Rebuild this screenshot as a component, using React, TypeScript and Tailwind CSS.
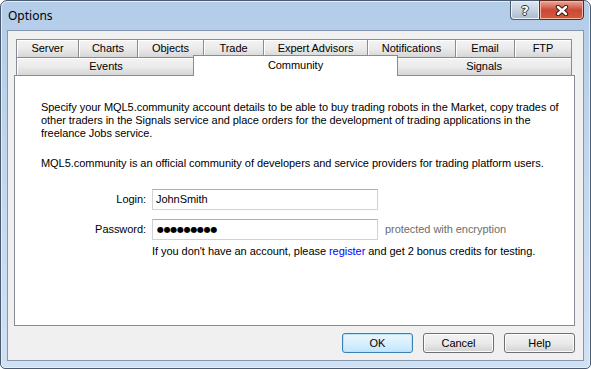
import React from 'react';

const rowOne = [
  { label: 'Server', w: 'w-[62px]' },
  { label: 'Charts', w: 'w-[59px]' },
  { label: 'Objects', w: 'w-[66px]' },
  { label: 'Trade', w: 'w-[60px]' },
  { label: 'Expert Advisors', w: 'w-[104px]' },
  { label: 'Notifications', w: 'w-[88px]' },
  { label: 'Email', w: 'w-[59px]' },
  { label: 'FTP', w: 'w-[58px]' },
];

const tabBase =
  'h-[18px] flex items-center justify-center border-t border-l border-[#898c95] bg-gradient-to-b from-[#f4f4f4] via-[#ebebeb] to-[#d6d6d6] shadow-[inset_1px_1px_0_#ffffff] text-black';

const WinButton = ({ label, focused }: { label: string; focused?: boolean }) => (
  <button
    className={
      'w-[71px] h-[20px] rounded-[3px] border text-[11px] text-black flex items-center justify-center ' +
      (focused
        ? 'border-[#3c7fb1] bg-gradient-to-b from-[#eaf6fd] via-[#d9f0fc] to-[#bee6fd] shadow-[inset_0_0_0_1px_#b7e3fb]'
        : 'border-[#707070] bg-gradient-to-b from-[#f2f2f2] via-[#ebebeb] to-[#d2d2d2] shadow-[inset_0_0_0_1px_#fbfbfb]')
    }
  >
    {label}
  </button>
);

export default function App() {
  return (
    <div className="w-[591px] h-[369px] font-['Liberation_Sans',Tahoma,sans-serif] text-[11px] leading-[13px] tracking-[-0.05px] text-black bg-white">
      <div className="w-full h-full rounded-t-[7px] rounded-b-[5px] border border-[#4a5a70] bg-gradient-to-b from-[#b3cce8] via-[#c3d8ef] to-[#d0e1f4] shadow-[inset_0_0_0_1px_#e4eef9] flex flex-col">
        {/* title bar */}
        <div className="h-[29px] flex items-start justify-between shrink-0">
          <span className="pl-[7px] pt-[7px] text-[12px] leading-[15px] tracking-normal font-['Noto_Sans',sans-serif] text-black">
            Options
          </span>
          <div className="flex mr-[6px] -mt-px">
            <div className="w-[29px] h-[20px] border border-[#4b5b70] border-r-0 rounded-bl-[4px] bg-gradient-to-b from-[#dfe7f0] via-[#c6d2e0] to-[#a9bbd0] shadow-[inset_0_0_0_1px_#eef3f8] flex items-center justify-center">
              <span className="text-white font-bold text-[13px] leading-none font-['DejaVu_Sans',sans-serif] [text-shadow:1px_0_0_#2b3644,-1px_0_0_#2b3644,0_1px_0_#2b3644,0_-1px_0_#2b3644]">
                ?
              </span>
            </div>
            <div className="w-[45px] h-[20px] border border-[#5a2a24] rounded-br-[4px] bg-gradient-to-b from-[#e9a896] via-[#c9493a] to-[#d65b36] shadow-[inset_0_0_0_1px_#f1b8a8] flex items-center justify-center">
              <svg width="14" height="11" viewBox="0 0 14 11">
                <path d="M3 2 L11 9 M11 2 L3 9" stroke="#3a1a14" strokeWidth="4.4" strokeLinecap="round" />
                <path d="M3 2 L11 9 M11 2 L3 9" stroke="#ffffff" strokeWidth="2.4" strokeLinecap="round" />
              </svg>
            </div>
          </div>
        </div>

        {/* client area */}
        <div className="flex-1 mx-[6px] mb-[7px] border border-[#8497ae] bg-[#f0f0f0] flex flex-col">
          <div className="ml-[6px] mr-[8px] mt-[8px]">
            <div className="px-[2px]">
              <div className="flex">
                {rowOne.map((t, i) => (
                  <div
                    key={t.label}
                    className={tabBase + ' ' + t.w + (i === rowOne.length - 1 ? ' border-r' : '')}
                  >
                    {t.label}
                  </div>
                ))}
              </div>
              <div className="flex h-[18px] items-start">
                <div className={tabBase + ' w-[179px]'}>Events</div>
                <div className="relative z-10 w-[205px] -mx-[2px] h-[21px] -mt-[2px] border-t border-l border-r border-[#898c95] bg-white flex items-start justify-center pt-[3px]">
                  Community
                </div>
                <div className={tabBase + ' w-[176px] border-r'}>Signals</div>
              </div>
            </div>

            <div className="h-[251px] border border-[#898c95] bg-white pl-[26px] pt-[25px]">
              <p className="whitespace-nowrap">
                Specify your MQL5.community account details to be able to buy trading robots in the Market, copy trades of
                <br />
                other traders in the Signals service and place orders for the development of trading applications in the
                <br />
                freelance Jobs service.
              </p>
              <p className="mt-[17px] whitespace-nowrap">
                MQL5.community is an official community of developers and service providers for trading platform users.
              </p>

              <div className="mt-[19px] flex flex-col gap-[9px]">
                <div className="flex items-center">
                  <span className="w-[105px] text-right mr-[6px]">Login:</span>
                  <div className="w-[226px] h-[21px] border border-[#cfd3d8] border-t-[#abadb3] bg-white flex items-center pl-[3px]">
                    JohnSmith
                  </div>
                </div>
                <div className="flex items-center">
                  <span className="w-[105px] text-right mr-[6px]">Password:</span>
                  <div className="w-[226px] h-[21px] border border-[#cfd3d8] border-t-[#abadb3] bg-white flex items-center pl-[4px]">
                    <span className="font-['DejaVu_Sans',sans-serif] text-[8px] tracking-[-0.3px]">●●●●●●●●●</span>
                  </div>
                  <span className="ml-[7px] text-[#6d6d6d]">protected with encryption</span>
                </div>
              </div>

              <p className="mt-[5px] ml-[111px] whitespace-nowrap">
                If you don't have an account, please <span className="text-[#0000ff]">register</span> and get 2 bonus
                credits for testing.
              </p>
            </div>
          </div>

          <div className="mt-[7px] mr-[8px] flex justify-end gap-[10px]">
            <WinButton label="OK" focused />
            <WinButton label="Cancel" />
            <WinButton label="Help" />
          </div>
        </div>
      </div>
    </div>
  );
}
